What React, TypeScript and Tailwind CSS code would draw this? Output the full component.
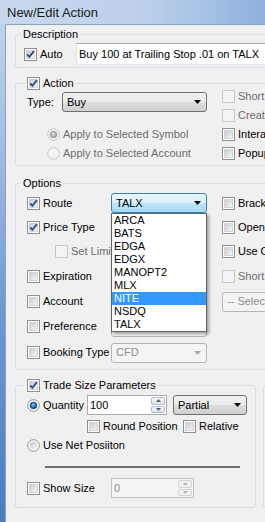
import React from "react";

type Variant = "normal" | "hot" | "disabled";

const ROUTES = ["ARCA", "BATS", "EDGA", "EDGX", "MANOPT2", "MLX", "NITE", "NSDQ", "TALX"];

function CheckBox({ checked = false, disabled = false }: { checked?: boolean; disabled?: boolean }) {
  return (
    <svg width="13" height="13" viewBox="0 0 13 13" className="block shrink-0">
      <defs>
        <linearGradient id="cbIn" x1="0" y1="0" x2="1" y2="1">
          <stop offset="0" stopColor="#c6cace" />
          <stop offset="1" stopColor="#f7f7f7" />
        </linearGradient>
      </defs>
      <rect x="0.5" y="0.5" width="12" height="12" fill={disabled ? "#f4f4f4" : "#ffffff"} stroke={disabled ? "#c8c8c8" : "#8e8f8f"} />
      {!disabled && <rect x="2.5" y="2.5" width="8" height="8" fill="url(#cbIn)" stroke="#d2d4d8" />}
      {checked && <path d="M3.2 6.3 L5.4 8.9 L9.9 3.1" fill="none" stroke="#2f4a8e" strokeWidth="1.8" />}
    </svg>
  );
}

function Radio({ checked = false, disabled = false }: { checked?: boolean; disabled?: boolean }) {
  return (
    <svg width="13" height="13" viewBox="0 0 13 13" className="block shrink-0">
      <defs>
        <linearGradient id="rdIn" x1="0" y1="0" x2="1" y2="1">
          <stop offset="0" stopColor="#c5c9ce" />
          <stop offset="1" stopColor="#f7f7f7" />
        </linearGradient>
        <radialGradient id="rdDot" cx="0.45" cy="0.4" r="0.65">
          <stop offset="0" stopColor="#9ad6ff" />
          <stop offset="0.45" stopColor="#2b7bd8" />
          <stop offset="1" stopColor="#0a3579" />
        </radialGradient>
        <radialGradient id="rdDotOff" cx="0.45" cy="0.4" r="0.65">
          <stop offset="0" stopColor="#e8e8e8" />
          <stop offset="0.5" stopColor="#b4b4b4" />
          <stop offset="1" stopColor="#8a8a8a" />
        </radialGradient>
      </defs>
      <circle cx="6.5" cy="6.5" r="5.8" fill={disabled ? "#f4f4f4" : "#ffffff"} stroke={disabled ? "#c4c4c4" : "#8e8f8f"} />
      {!disabled && <circle cx="6.5" cy="6.5" r="4" fill="url(#rdIn)" />}
      {checked && (
        <circle cx="6.5" cy="6.5" r="3.3" fill={disabled ? "url(#rdDotOff)" : "url(#rdDot)"} stroke={disabled ? "#999999" : "#183f7a"} strokeWidth="0.8" />
      )}
    </svg>
  );
}

function Arrow({ color = "#000000" }: { color?: string }) {
  return (
    <svg width="7" height="4" viewBox="0 0 7 4" className="block shrink-0">
      <path d="M0 0H7L3.5 4Z" fill={color} />
    </svg>
  );
}

function Combo({ text = "", variant = "normal", className = "" }: { text?: string; variant?: Variant; className?: string }) {
  const skins = {
    normal: "border-[#707070] bg-[linear-gradient(#f2f2f2,#ebebeb_50%,#dddddd_50%,#cfcfcf)] text-black",
    hot: "border-[#3c7fb1] bg-[linear-gradient(#eaf6fd,#d9f0fc_50%,#bee6fd_50%,#a7d9f5)] text-black",
    disabled: "border-[#b5b5b5] bg-[#f4f4f4] text-[#8d8d8d]",
  };
  return (
    <div className={`flex items-center justify-between h-[20px] border rounded-[3px] pl-[4px] pr-[5px] whitespace-nowrap ${skins[variant]} ${className}`}>
      <span>{text}</span>
      <Arrow color={variant === "disabled" ? "#a9a9a9" : "#000000"} />
    </div>
  );
}

function SpinBox({ value, disabled = false, className = "" }: { value: string; disabled?: boolean; className?: string }) {
  const btn = disabled
    ? "border-[#d3d3d3] bg-[#f2f2f2]"
    : "border-[#b3bccb] bg-[linear-gradient(#f7f8fa,#dfe3ea)]";
  const arrow = disabled ? "#b5b5b5" : "#4d5e84";
  return (
    <div className={`flex h-[20px] border ${disabled ? "border-[#c2c2c2] bg-[#f4f4f4] text-[#8d8d8d]" : "border-[#abadb3] bg-white"} ${className}`}>
      <div className="flex-1 flex items-center pl-[2px]">{value}</div>
      <div className="flex flex-col w-[16px] p-px gap-px">
        <div className={`flex-1 flex items-center justify-center border rounded-[2px] ${btn}`}>
          <svg width="5" height="3" viewBox="0 0 5 3"><path d="M0 3H5L2.5 0Z" fill={arrow} /></svg>
        </div>
        <div className={`flex-1 flex items-center justify-center border rounded-[2px] ${btn}`}>
          <svg width="5" height="3" viewBox="0 0 5 3"><path d="M0 0H5L2.5 3Z" fill={arrow} /></svg>
        </div>
      </div>
    </div>
  );
}

function CheckLabel({
  checked = false,
  disabled = false,
  children,
  className = "",
}: {
  checked?: boolean;
  disabled?: boolean;
  children: React.ReactNode;
  className?: string;
}) {
  return (
    <div className={`flex items-center gap-[3px] shrink-0 whitespace-nowrap ${disabled ? "text-[#6d6d6d]" : ""} ${className}`}>
      <CheckBox checked={checked} disabled={disabled} />
      <span>{children}</span>
    </div>
  );
}

function RouteList() {
  return (
    <div className="absolute left-0 top-full z-10 w-[96px] bg-white border border-[#646464] shadow-[2px_2px_3px_rgba(0,0,0,0.35)]">
      {ROUTES.map((r) => (
        <div key={r} className={`h-[13px] leading-[13px] pl-[2px] ${r === "NITE" ? "bg-[#3399ff] text-white" : "text-black"}`}>
          {r}
        </div>
      ))}
    </div>
  );
}

export default function App() {
  return (
    <div className="w-[265px] h-[522px] overflow-hidden flex flex-col bg-[linear-gradient(180deg,#c4d7ee_0%,#9dbbe2_30%,#6f98d0_60%,#4a7cc3_100%)] font-['Liberation_Sans',Arial,sans-serif] text-[11px] leading-[13px] text-black select-none">
      {/* title bar */}
      <div className="h-[24px] shrink-0 flex items-center pl-[7px] text-[13px] text-[#1a1a1a] bg-[linear-gradient(90deg,#c9d9ed,#bcd0ea_55%,#8fb1dd)]">
        New/Edit Action
      </div>

      {/* client area */}
      <div className="flex-1 ml-[5px] w-[600px] bg-[#f0f0f0] border-l border-t border-[#8fa3bd] rounded-tl-[2px] pl-[9px] pt-[3px]">
        {/* Description */}
        <fieldset className="w-[480px] border border-[#d5dfe5] rounded-[3px] px-[5px] pb-[2px]">
          <legend className="px-[2px]">
            <span className="block h-[13px]">Description</span>
          </legend>
          <div className="flex items-center mt-[2px] h-[22px] pl-[3px]">
            <CheckLabel checked className="w-[52px]">Auto</CheckLabel>
            <div className="h-[22px] w-[320px] bg-white border border-[#abadb3] border-l-[#dbdfe6] border-b-[#e3e9ef] flex items-center pl-[2px] whitespace-nowrap">
              Buy 100 at Trailing Stop .01 on TALX
            </div>
          </div>
        </fieldset>

        {/* Action */}
        <fieldset className="mt-[9px] w-[480px] border border-[#d5dfe5] rounded-[3px] px-[5px] pb-[2px]">
          <legend className="ml-[4px] px-[2px]">
            <span className="flex items-center gap-[3px] h-[13px]">
              <CheckBox checked />
              <span>Action</span>
            </span>
          </legend>
          <div className="flex items-start pl-[6px]">
            <div className="w-[195px] shrink-0">
              <div className="flex items-center h-[20px] mt-[2px]">
                <span className="w-[35px] shrink-0">Type:</span>
                <Combo text="Buy" className="w-[145px]" />
              </div>
              <div className="mt-[13px] pl-[20px] text-[#6d6d6d]">
                <div className="flex items-center gap-[3px] h-[19px] whitespace-nowrap">
                  <Radio checked disabled />
                  <span>Apply to Selected Symbol</span>
                </div>
                <div className="flex items-center gap-[3px] h-[19px] whitespace-nowrap">
                  <Radio disabled />
                  <span>Apply to Selected Account</span>
                </div>
              </div>
            </div>
            <div className="-mt-[3px]">
              <CheckLabel disabled className="h-[19px]">Short Locate</CheckLabel>
              <CheckLabel disabled className="h-[19px]">Create Bracket</CheckLabel>
              <CheckLabel className="h-[19px]">Interactive</CheckLabel>
              <CheckLabel className="h-[19px]">Popup Confirmation</CheckLabel>
            </div>
          </div>
        </fieldset>

        {/* Options */}
        <fieldset className="mt-[11px] w-[480px] border border-[#d5dfe5] rounded-[3px] px-[5px] pb-[3px]">
          <legend className="px-[2px]">
            <span className="block h-[13px]">Options</span>
          </legend>
          <div className="mt-[1px] pl-[6px]">
            <div className="flex items-center h-[24px]">
              <CheckLabel checked className="w-[84px]">Route</CheckLabel>
              <div className="relative w-[96px] shrink-0">
                <Combo text="TALX" variant="hot" />
                <RouteList />
              </div>
              <CheckLabel className="ml-[15px]">Bracket Order</CheckLabel>
            </div>
            <div className="flex items-center h-[24px]">
              <CheckLabel checked className="w-[84px]">Price Type</CheckLabel>
              <Combo variant="disabled" className="w-[96px] shrink-0" />
              <CheckLabel className="ml-[15px]">Open Position</CheckLabel>
            </div>
            <div className="flex items-center h-[25px]">
              <CheckLabel disabled className="w-[84px] pl-[28px]">Set Limit</CheckLabel>
              <Combo variant="disabled" className="w-[96px] shrink-0" />
              <CheckLabel className="ml-[15px]">Use OCO</CheckLabel>
            </div>
            <div className="flex items-center h-[25px]">
              <CheckLabel className="w-[84px]">Expiration</CheckLabel>
              <Combo variant="disabled" className="w-[96px] shrink-0" />
              <CheckLabel disabled className="ml-[15px]">Short Locate</CheckLabel>
            </div>
            <div className="flex items-center h-[25px]">
              <CheckLabel className="w-[84px]">Account</CheckLabel>
              <Combo variant="disabled" className="w-[96px] shrink-0" />
              <Combo text="-- Select Account --" variant="disabled" className="ml-[15px] w-[160px] shrink-0" />
            </div>
            <div className="flex items-center h-[25px]">
              <CheckLabel className="w-[84px]">Preference</CheckLabel>
              <Combo variant="disabled" className="w-[96px] shrink-0" />
            </div>
            <div className="flex items-center h-[27px]">
              <CheckLabel className="w-[84px]">Booking Type</CheckLabel>
              <Combo text="CFD" variant="disabled" className="w-[96px] shrink-0" />
            </div>
          </div>
        </fieldset>

        {/* Trade size */}
        <div className="flex mt-[9px] gap-[7px]">
          <fieldset className="w-[241px] shrink-0 border border-[#d5dfe5] rounded-[3px] px-[5px] pb-[9px]">
            <legend className="ml-[4px] px-[2px]">
              <span className="flex items-center gap-[3px] h-[13px]">
                <CheckBox checked />
                <span>Trade Size Parameters</span>
              </span>
            </legend>
            <div className="mt-[1px] pl-[6px]">
              <div className="flex items-center h-[24px]">
                <div className="flex items-center gap-[3px] w-[60px] shrink-0">
                  <Radio checked />
                  <span>Quantity</span>
                </div>
                <SpinBox value="100" className="w-[80px] shrink-0" />
                <Combo text="Partial" className="w-[74px] ml-[6px] shrink-0" />
              </div>
              <div className="flex items-center h-[18px] pl-[60px]">
                <CheckLabel className="w-[96px]">Round Position</CheckLabel>
                <CheckLabel>Relative</CheckLabel>
              </div>
              <div className="flex items-center gap-[3px] h-[21px]">
                <Radio />
                <span>Use Net Posiiton</span>
              </div>
              <div className="mt-[10px] ml-[18px] w-[195px] h-[2px] bg-[#707070]" />
              <div className="flex items-center h-[20px] mt-[10px]">
                <CheckLabel className="w-[84px]">Show Size</CheckLabel>
                <SpinBox value="0" disabled className="w-[83px] shrink-0" />
              </div>
            </div>
          </fieldset>
          <fieldset className="w-[200px] shrink-0 border border-[#d5dfe5] rounded-[3px] px-[5px]">
            <legend className="px-[2px]">
              <span className="block h-[13px]">Display</span>
            </legend>
          </fieldset>
        </div>
      </div>
    </div>
  );
}
